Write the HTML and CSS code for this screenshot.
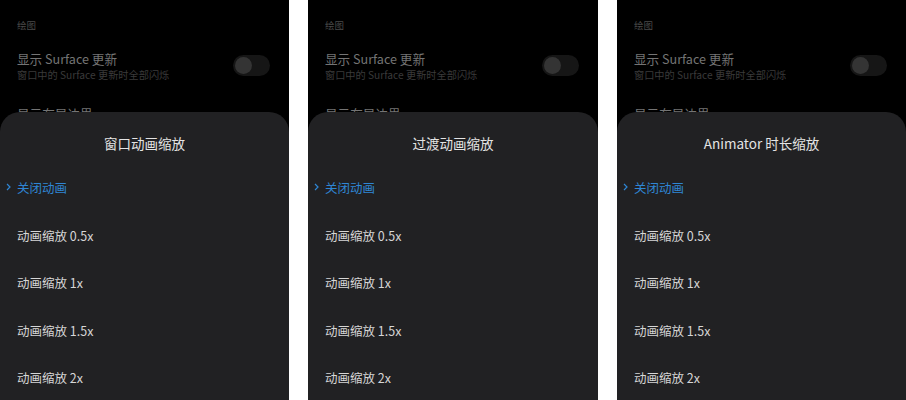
FILE: index.html
```html
<!DOCTYPE html>
<html lang="zh-CN">
<head>
<meta charset="utf-8">
<link rel="stylesheet" href="styles.css">
</head>
<body>
<div class="screens">
  <div class="panel">
    <div class="settings">
      <div class="group-label">绘图</div>
      <div class="row">
        <div class="row-text">
          <div class="row-title">显示 Surface 更新</div>
          <div class="row-sub">窗口中的 Surface 更新时全部闪烁</div>
        </div>
        <div class="toggle"><span class="knob"></span></div>
      </div>
      <div class="row row-next">
        <div class="row-text"><div class="row-title">显示布局边界</div></div>
      </div>
    </div>
    <div class="sheet">
      <div class="sheet-title">窗口动画缩放</div>
      <ul class="options">
        <li class="option selected"><svg class="chev" width="5" height="8" viewBox="0 0 5 8"><path d="M1 1l3 3-3 3" fill="none" stroke="currentColor" stroke-width="1.2"/></svg>关闭动画</li>
        <li class="option">动画缩放 0.5x</li>
        <li class="option">动画缩放 1x</li>
        <li class="option">动画缩放 1.5x</li>
        <li class="option">动画缩放 2x</li>
      </ul>
    </div>
  </div>
  <div class="panel panel-mid">
    <div class="settings">
      <div class="group-label">绘图</div>
      <div class="row">
        <div class="row-text">
          <div class="row-title">显示 Surface 更新</div>
          <div class="row-sub">窗口中的 Surface 更新时全部闪烁</div>
        </div>
        <div class="toggle"><span class="knob"></span></div>
      </div>
      <div class="row row-next">
        <div class="row-text"><div class="row-title">显示布局边界</div></div>
      </div>
    </div>
    <div class="sheet">
      <div class="sheet-title">过渡动画缩放</div>
      <ul class="options">
        <li class="option selected"><svg class="chev" width="5" height="8" viewBox="0 0 5 8"><path d="M1 1l3 3-3 3" fill="none" stroke="currentColor" stroke-width="1.2"/></svg>关闭动画</li>
        <li class="option">动画缩放 0.5x</li>
        <li class="option">动画缩放 1x</li>
        <li class="option">动画缩放 1.5x</li>
        <li class="option">动画缩放 2x</li>
      </ul>
    </div>
  </div>
  <div class="panel">
    <div class="settings">
      <div class="group-label">绘图</div>
      <div class="row">
        <div class="row-text">
          <div class="row-title">显示 Surface 更新</div>
          <div class="row-sub">窗口中的 Surface 更新时全部闪烁</div>
        </div>
        <div class="toggle"><span class="knob"></span></div>
      </div>
      <div class="row row-next">
        <div class="row-text"><div class="row-title">显示布局边界</div></div>
      </div>
    </div>
    <div class="sheet">
      <div class="sheet-title">Animator 时长缩放</div>
      <ul class="options">
        <li class="option selected"><svg class="chev" width="5" height="8" viewBox="0 0 5 8"><path d="M1 1l3 3-3 3" fill="none" stroke="currentColor" stroke-width="1.2"/></svg>关闭动画</li>
        <li class="option">动画缩放 0.5x</li>
        <li class="option">动画缩放 1x</li>
        <li class="option">动画缩放 1.5x</li>
        <li class="option">动画缩放 2x</li>
      </ul>
    </div>
  </div>
</div>
</body>
</html>
```
FILE: styles.css
```css
html, body {
  margin: 0;
  padding: 0;
  background: #ffffff;
}
.screens {
  display: flex;
  gap: 19px;
  width: 906px;
  height: 400px;
  font-family: "Noto Sans CJK SC", "Noto Sans", sans-serif;
}
.panel {
  width: 289px;
  height: 400px;
  background: #000;
  display: flex;
  flex-direction: column;
  overflow: hidden;
}
.panel-mid {
  width: 290px;
}
.settings {
  height: 112px;
  overflow: hidden;
  padding: 17px 19px 0 17px;
  box-sizing: border-box;
  flex: none;
}
.group-label {
  font-size: 9.5px;
  line-height: 16px;
  color: #4a4a4a;
}
.row {
  display: flex;
  align-items: center;
  justify-content: space-between;
  margin-top: 17px;
}
.row-next {
  margin-top: 24px;
}
.row-title {
  font-size: 12.6px;
  line-height: 18px;
  color: #747474;
}
.row-sub {
  font-size: 10.2px;
  line-height: 13px;
  color: #3a3a3a;
}
.toggle {
  width: 37px;
  height: 21px;
  border-radius: 11px;
  background: #161616;
  display: flex;
  align-items: center;
  padding-left: 2px;
  box-sizing: border-box;
}
.knob {
  width: 17px;
  height: 17px;
  border-radius: 50%;
  background: #343434;
}
.sheet {
  flex: 1;
  background: #212123;
  border-radius: 20px 20px 0 0;
  padding-top: 20px;
}
.sheet-title {
  text-align: center;
  font-size: 13.5px;
  line-height: 22px;
  color: #e4e4e4;
}
.options {
  list-style: none;
  margin: 10px 0 0;
  padding: 0;
}
.option {
  height: 47.5px;
  display: flex;
  align-items: center;
  padding-left: 17px;
  font-size: 12.5px;
  color: #d6d6d6;
}
.option.selected {
  color: #2f86d4;
}
.chev {
  margin-left: -11px;
  margin-right: 6px;
  margin-top: -1px;
}
```
